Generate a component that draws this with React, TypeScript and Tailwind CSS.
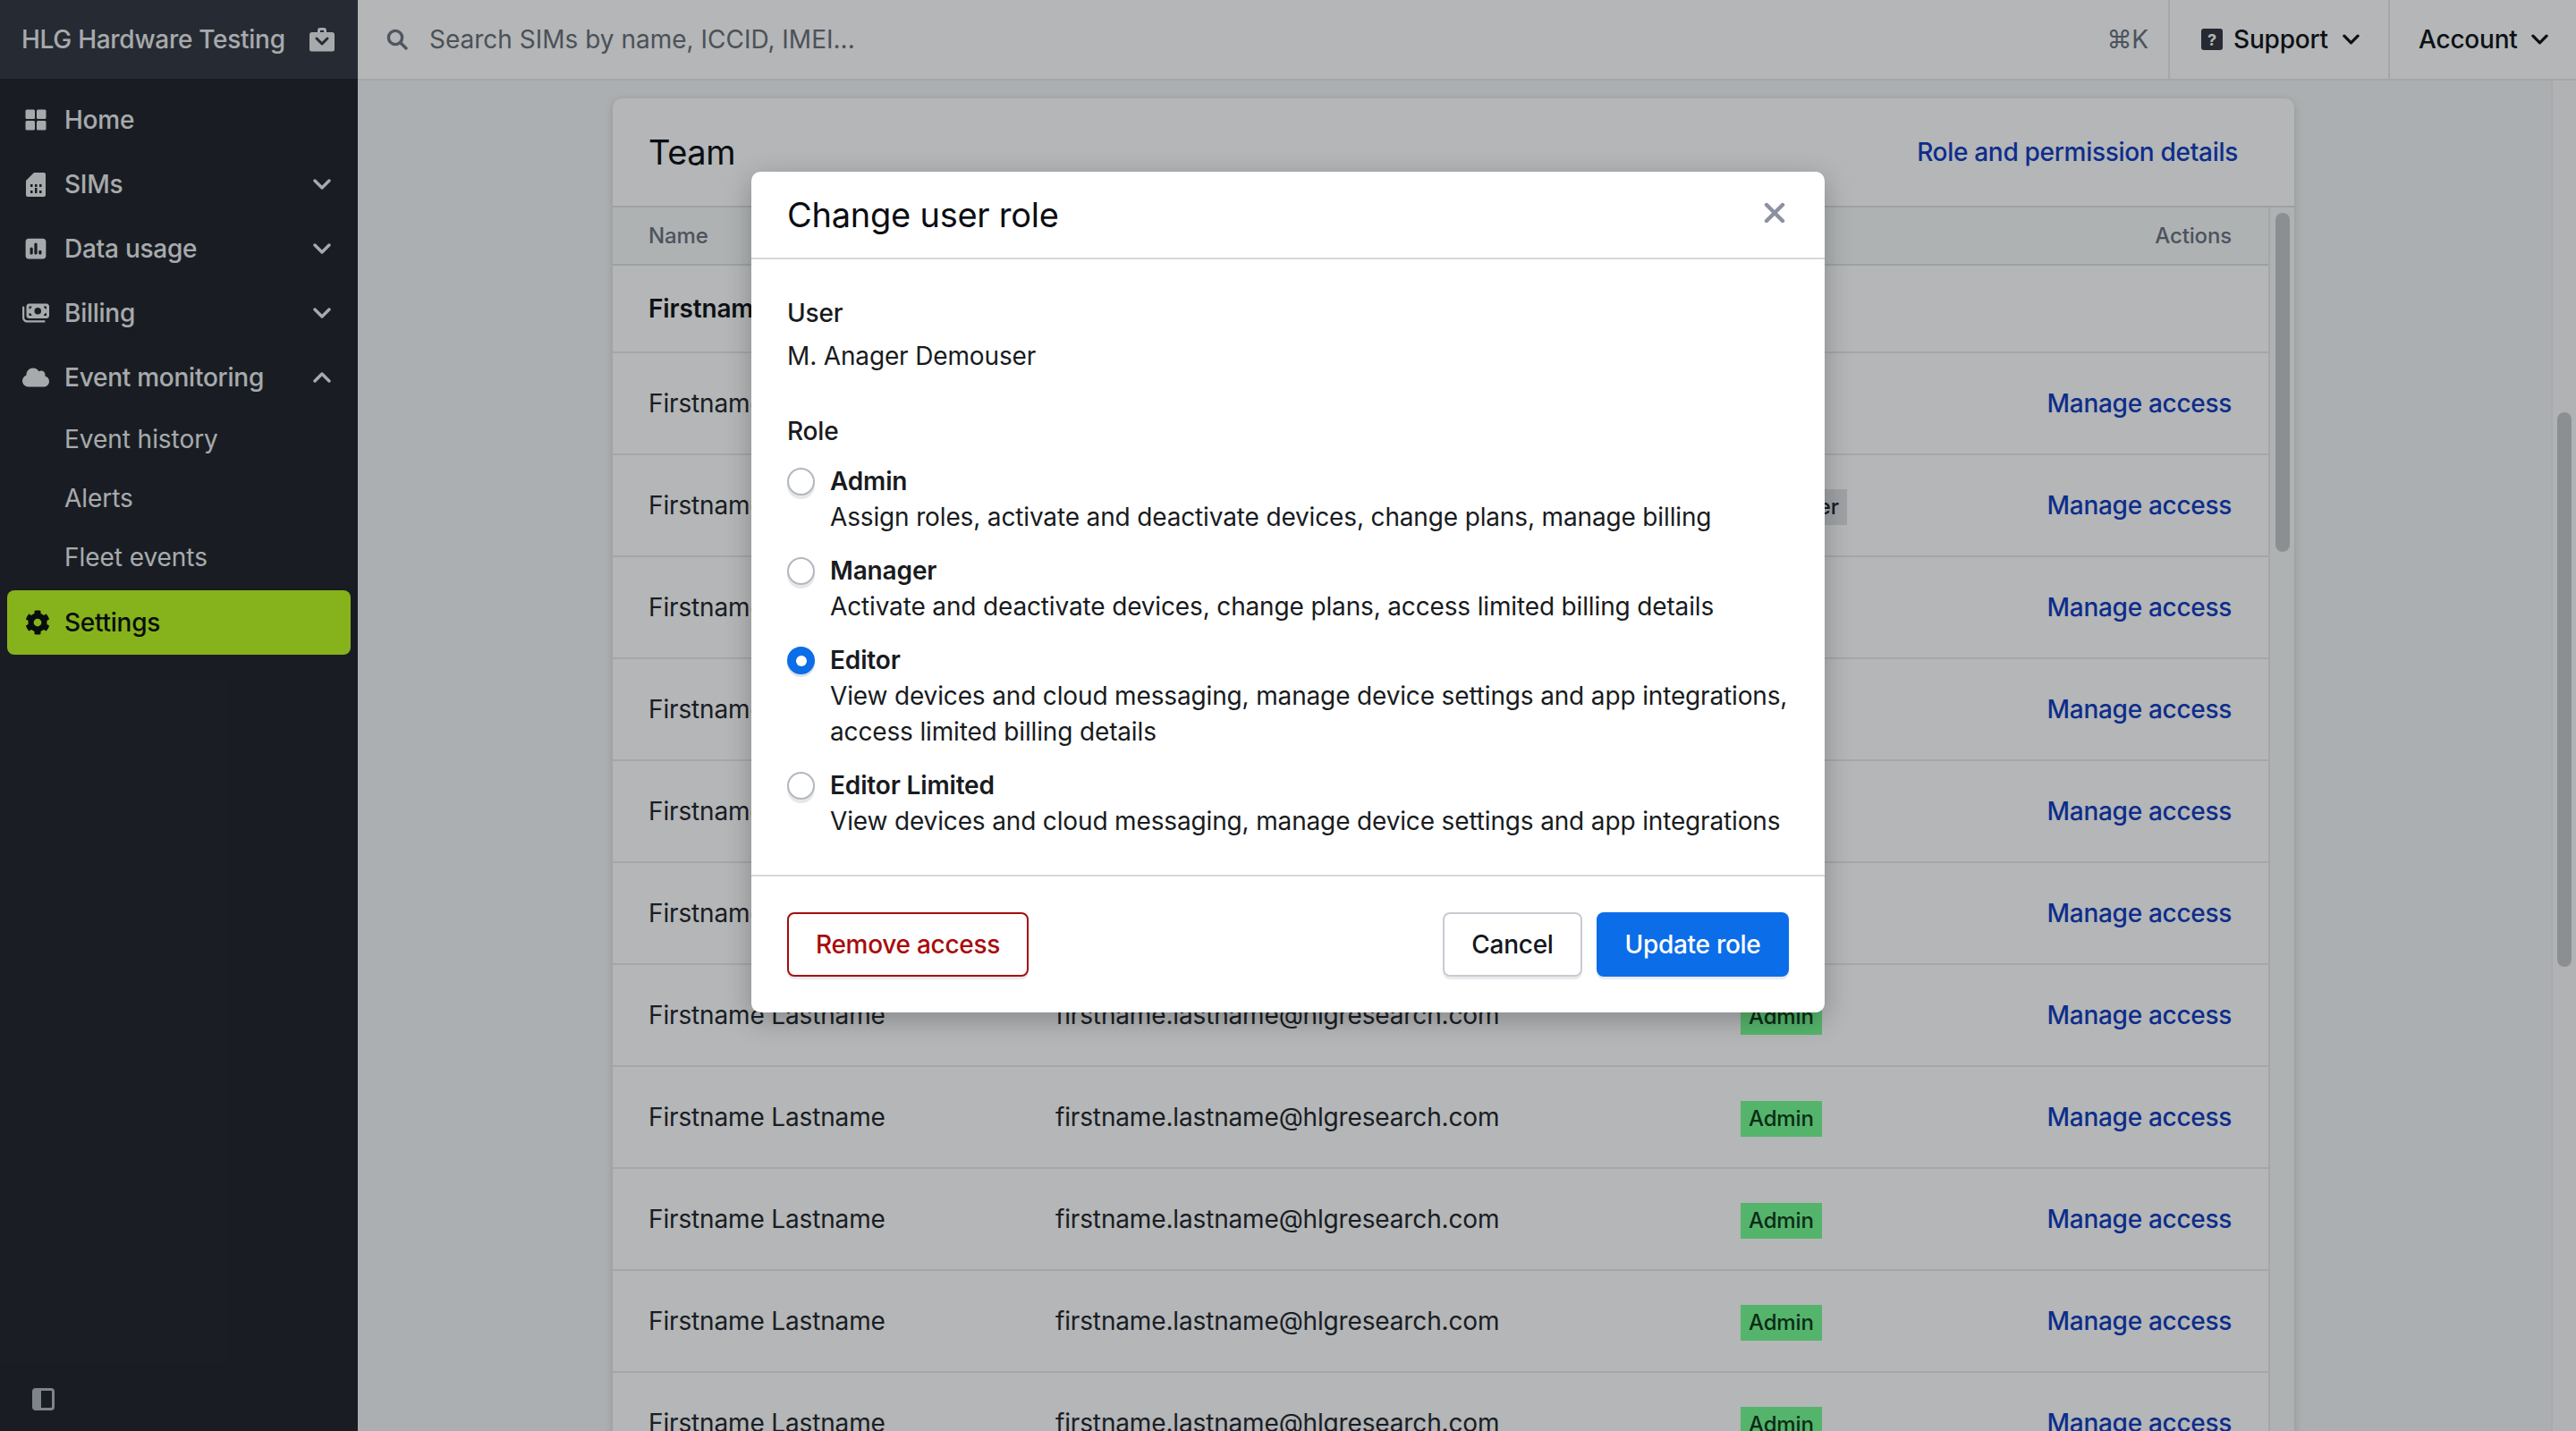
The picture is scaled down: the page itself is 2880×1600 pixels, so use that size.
import { FaCog, FaCloud } from "react-icons/fa";
import { FaMoneyBills, FaSquarePollVertical } from "react-icons/fa6";

function Chevron({ up = false, className = "" }: { up?: boolean; className?: string }) {
  return (
    <svg viewBox="0 0 20 12" fill="none" stroke="currentColor" strokeWidth={3.4} strokeLinecap="round" strokeLinejoin="round" className={className}>
      <path d={up ? "M2 10l8-8 8 8" : "M2 2l8 8 8-8"} />
    </svg>
  );
}

function HomeIcon() {
  return (
    <svg viewBox="0 0 24 24" fill="currentColor" className="h-[24px] w-[24px]">
      <rect x="0.5" y="0.5" width="10.5" height="10.5" rx="1.5" />
      <rect x="13" y="0.5" width="10.5" height="10.5" rx="1.5" />
      <rect x="0.5" y="13" width="10.5" height="10.5" rx="1.5" />
      <rect x="13" y="13" width="10.5" height="10.5" rx="1.5" />
    </svg>
  );
}

function SimIcon() {
  return (
    <svg viewBox="0 0 22 27" className="h-[27px] w-[22px]">
      <path fill="currentColor" d="M9 0h11a2 2 0 0 1 2 2v23a2 2 0 0 1-2 2H2a2 2 0 0 1-2-2V9z" />
      <g fill="#22242b">
        <rect x="5" y="13" width="2.5" height="3" />
        <rect x="10" y="13" width="2.5" height="3" />
        <rect x="15" y="13" width="2.5" height="3" />
        <rect x="5" y="20" width="2.5" height="3" />
        <rect x="10" y="17" width="2.5" height="6" />
        <rect x="15" y="20" width="2.5" height="3" />
      </g>
    </svg>
  );
}

function BriefcaseIcon() {
  return (
    <svg viewBox="0 0 28 28" className="h-[28px] w-[28px]">
      <path fill="currentColor" d="M9 6V4a3 3 0 0 1 3-3h4a3 3 0 0 1 3 3v2h6a3 3 0 0 1 3 3v16a2.5 2.5 0 0 1-2.5 2.5h-23A2.5 2.5 0 0 1 0 25V9a3 3 0 0 1 3-3zm3-2v2h4V4z" />
      <path fill="none" stroke="#343741" strokeWidth={3} strokeLinecap="round" strokeLinejoin="round" d="M8 13l6 6 6-6" />
    </svg>
  );
}

const navItems = [
  { label: "Home", icon: <HomeIcon /> },
  { label: "SIMs", icon: <SimIcon />, chevron: "down" },
  { label: "Data usage", icon: <FaSquarePollVertical className="h-[26px] w-[24px]" />, chevron: "down" },
  { label: "Billing", icon: <FaMoneyBills className="h-[30px] w-[30px]" />, chevron: "down" },
  { label: "Event monitoring", icon: <FaCloud className="h-[30px] w-[30px]" />, chevron: "up" },
];

function Sidebar() {
  return (
    <aside className="flex h-full w-[400px] shrink-0 flex-col bg-[#22242b] text-[#edeef0]">
      <div className="flex h-[88px] items-center justify-between bg-[#343741] pl-[24px] pr-[26px] text-[28px] font-medium tracking-[-0.28px]">
        <span>HLG Hardware Testing</span>
        <BriefcaseIcon />
      </div>
      <nav className="flex flex-col pt-[10px] text-[28px] font-medium tracking-[-0.25px]">
        {navItems.map((item) => (
          <div key={item.label} className="flex h-[72px] items-center">
            <span className="ml-[22px] mr-[14px] flex w-[36px] shrink-0 justify-center">{item.icon}</span>
            <span className="flex-1">{item.label}</span>
            {item.chevron && <Chevron up={item.chevron === "up"} className="mr-[30px] h-[12px] w-[20px]" />}
          </div>
        ))}
        {["Event history", "Alerts", "Fleet events"].map((label) => (
          <div key={label} className="flex h-[66px] items-center pl-[72px] font-normal tracking-[-0.05px]">
            {label}
          </div>
        ))}
        <div className="mx-[8px] mt-[4px] flex h-[72px] items-center rounded-[8px] bg-[#bdfb20] text-[#0a0d0c]">
          <FaCog className="ml-[20px] h-[28px] w-[28px]" />
          <span className="ml-[16px]">Settings</span>
        </div>
      </nav>
      <div className="mt-auto pb-[23px] pl-[36px]">
        <div className="flex h-[25px] w-[25px] rounded-[4px] border-[3px] border-[#b4b7c0] bg-[#22242b]">
          <span className="h-full w-[7px] bg-[#b4b7c0]" />
        </div>
      </div>
    </aside>
  );
}

function TopBar() {
  return (
    <header className="flex h-[90px] shrink-0 items-center border-b-2 border-[#e8e9ec] bg-white">
      <svg viewBox="0 0 24 24" fill="none" stroke="#6f7585" strokeWidth={3.4} strokeLinecap="round" className="ml-[32px] h-[24px] w-[24px]">
        <circle cx="10" cy="10" r="7.6" />
        <path d="M16 16l6 6" />
      </svg>
      <span className="ml-[24px] flex-1 text-[28px] tracking-normal text-[#6b6f78]">Search SIMs by name, ICCID, IMEI...</span>
      <span className="mr-[22px] text-[28px] text-[#6b7280]">⌘K</span>
      <div className="flex h-full w-[246px] items-center border-l-2 border-[#e8e9ec] pl-[35px] text-[28px] font-medium tracking-[-0.2px] text-[#111318]">
        <span className="flex h-[24px] w-[24px] items-center justify-center rounded-[3px] bg-[#343741] text-[18px] font-bold text-white">?</span>
        <span className="ml-[12px]">Support</span>
        <Chevron className="ml-[16px] h-[12px] w-[19px]" />
      </div>
      <div className="flex h-full w-[210px] items-center border-l-2 border-[#e8e9ec] pl-[32px] text-[28px] font-medium tracking-[-0.2px] text-[#111318]">
        <span>Account</span>
        <Chevron className="ml-[15px] h-[12px] w-[19px]" />
      </div>
    </header>
  );
}

function Badge({ role }: { role: string }) {
  const cls = role === "Admin" ? "bg-[#77fc92] text-[#0c3a17]" : "bg-[#e1e3e6] text-[#23262c]";
  return <span className={`inline-flex h-[40px] items-center px-[9px] text-[24px] font-medium ${cls}`}>{role}</span>;
}

const rows = [
  "Admin",
  "Manager",
  "Admin",
  "Admin",
  "Admin",
  "Admin",
  "Admin",
  "Admin",
  "Admin",
  "Admin",
  "Admin",
];

function TeamCard() {
  return (
    <section className="mx-auto mt-[20px] w-[1880px] rounded-t-[10px] bg-white shadow-[0_2px_10px_rgba(0,0,0,0.16)]">
      <div className="flex h-[122px] items-center justify-between border-b-2 border-[#dfe1e6] pl-[40px] pr-[63px]">
        <h2 className="text-[38px] font-normal tracking-[-0.4px] text-[#0b0d12]">Team</h2>
        <a className="text-[28px] font-medium tracking-[-0.3px] text-[#123cc0]">Role and permission details</a>
      </div>
      <div className="flex">
        <div className="min-w-0 flex-1">
          <div className="grid h-[65px] grid-cols-[455px_766px_1fr_auto] items-center border-b-2 border-[#dfe1e6] bg-[#f8f9fa] pl-[40px] pr-[41px] text-[24px] font-medium text-[#6b7280]">
            <span>Name</span>
            <span>Email</span>
            <span>Role</span>
            <span>Actions</span>
          </div>
          <div className="grid h-[98px] grid-cols-[455px_766px_1fr_auto] items-center border-b-2 border-[#e8e9ec] pl-[40px] pr-[41px] text-[28px] font-semibold text-[#111318]">
            <span>Firstname Lastname</span>
            <span />
            <span />
            <span />
          </div>
          {rows.map((role, i) => (
            <div key={i} className="grid h-[114px] grid-cols-[455px_766px_1fr_auto] items-center border-b-2 border-[#e8e9ec] pl-[40px] pr-[41px] text-[28px] text-[#23262c]">
              <span>Firstname Lastname</span>
              <span>firstname.lastname@hlgresearch.com</span>
              <span><Badge role={role} /></span>
              <a className="font-medium tracking-[-0.3px] text-[#123cc0]">Manage access</a>
            </div>
          ))}
        </div>
        <div className="w-[29px] shrink-0 border-l-2 border-[#e8e9ec] bg-[#f8f9fa] px-[6px] pt-[6px]">
          <div className="h-[379px] w-[16px] rounded-full bg-[#c6c7c9]" />
        </div>
      </div>
    </section>
  );
}

function ChangeRoleModal() {
  const roles = [
    { name: "Admin", lines: ["Assign roles, activate and deactivate devices, change plans, manage billing"] },
    { name: "Manager", lines: ["Activate and deactivate devices, change plans, access limited billing details"] },
    {
      name: "Editor",
      checked: true,
      lines: ["View devices and cloud messaging, manage device settings and app integrations,", "access limited billing details"],
    },
    { name: "Editor Limited", lines: ["View devices and cloud messaging, manage device settings and app integrations"] },
  ];
  return (
    <div className="absolute inset-0 bg-[#080c12]/30 pt-[192px]">
      <div className="mx-auto h-[940px] w-[1200px] rounded-[10px] bg-white shadow-[0_8px_30px_rgba(0,0,0,0.25)]">
        <div className="flex h-[98px] items-center justify-between border-b-2 border-[#d6d8dd] pl-[40px] pr-[44px]">
          <h2 className="text-[38px] font-normal tracking-[-0.25px] text-[#0b0d12]">Change user role</h2>
          <svg viewBox="0 0 24 24" fill="none" stroke="#8b91a0" strokeWidth={4.4} strokeLinecap="round" className="mb-[4px] h-[24px] w-[24px]">
            <path d="M3 3l18 18M21 3L3 21" />
          </svg>
        </div>
        <div className="px-[40px] pb-[40px] pt-[40px] text-[28px] leading-[40px] text-[#181b20]">
          <div className="font-medium">User</div>
          <div className="mt-[8px]">M. Anager Demouser</div>
          <div className="mt-[44px] font-medium">Role</div>
          <div className="mt-[16px] flex flex-col gap-[20px]">
            {roles.map((r) => (
              <div key={r.name} className="flex">
                <span className={`mt-[5px] flex h-[31px] w-[31px] shrink-0 items-center justify-center rounded-full ${r.checked ? "bg-[#0c6de8] shadow-[0_3px_0_#dfe1e5]" : "border-2 border-[#b3b7bf] bg-white shadow-[0_4px_0_#e6e7ea]"}`}>
                  {r.checked && <span className="h-[12px] w-[12px] rounded-full bg-white" />}
                </span>
                <div className="ml-[17px]">
                  <div className="font-semibold">{r.name}</div>
                  {r.lines.map((l) => (
                    <div key={l} className="whitespace-nowrap">{l}</div>
                  ))}
                </div>
              </div>
            ))}
          </div>
        </div>
        <div className="flex items-center justify-between border-t-2 border-[#d6d8dd] p-[40px]">
          <button className="h-[72px] w-[270px] rounded-[8px] border-2 border-[#a80c0c] text-[28px] font-medium tracking-[-0.28px] text-[#a80c0c] shadow-[0_3px_0_#e9eaed]">Remove access</button>
          <div className="flex gap-[16px]">
            <button className="h-[72px] w-[156px] rounded-[8px] border-2 border-[#c8cbd1] text-[28px] font-medium tracking-[-0.28px] text-[#14171c] shadow-[0_3px_0_#e9eaed]">Cancel</button>
            <button className="h-[72px] w-[215px] rounded-[8px] bg-[#0c6de8] text-[28px] font-medium tracking-[-0.28px] text-white shadow-[0_3px_0_#e9eaed]">Update role</button>
          </div>
        </div>
      </div>
    </div>
  );
}

export default function App() {
  return (
    <div className="relative flex h-[1600px] w-[2880px] overflow-hidden bg-[#f4f5f6] font-[Inter,sans-serif] tracking-[-0.15px]">
      <Sidebar />
      <div className="flex min-w-0 flex-1 flex-col">
        <TopBar />
        <div className="flex min-h-0 flex-1">
          <main className="min-w-0 flex-1 overflow-hidden pr-[2px]">
            <TeamCard />
          </main>
          <div className="w-[28px] shrink-0 border-l-2 border-[#eceded] bg-[#fafafa] px-[5px] pt-[371px]">
            <div className="h-[620px] w-[16px] rounded-full bg-[#c6c7c9]" />
          </div>
        </div>
      </div>
      <ChangeRoleModal />
    </div>
  );
}
